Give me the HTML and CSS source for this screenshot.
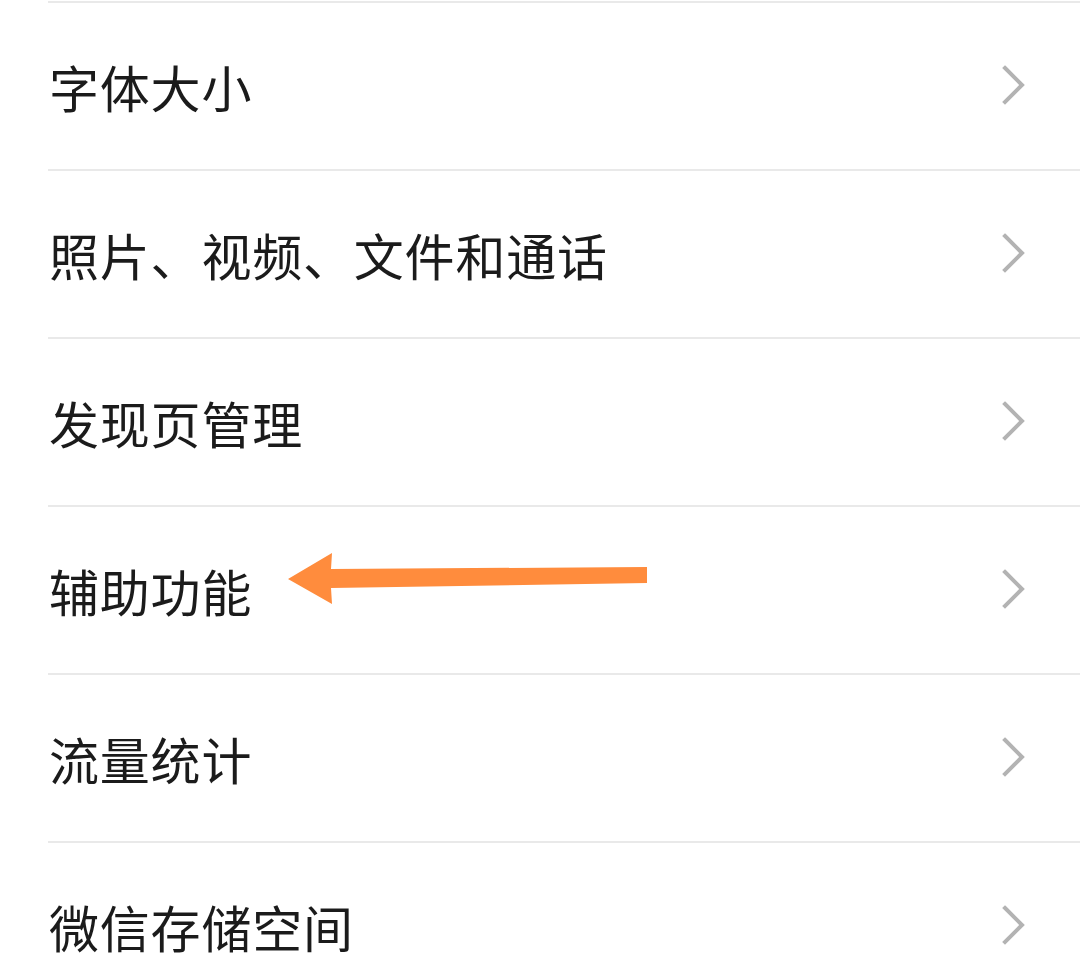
FILE: index.html
```html
<!DOCTYPE html>
<html lang="zh-CN">
<head>
<meta charset="utf-8">
<link rel="stylesheet" href="styles.css">
</head>
<body>
<div class="page">
  <div class="top-gap"></div>
  <ul class="list">
    <li class="row"><span class="label">字体大小</span><svg class="chev" viewBox="0 0 24 40"><path d="M3 3 L20 20 L3 37" /></svg></li>
    <li class="row"><span class="label">照片、视频、文件和通话</span><svg class="chev" viewBox="0 0 24 40"><path d="M3 3 L20 20 L3 37" /></svg></li>
    <li class="row"><span class="label">发现页管理</span><svg class="chev" viewBox="0 0 24 40"><path d="M3 3 L20 20 L3 37" /></svg></li>
    <li class="row"><span class="label">辅助功能</span><svg class="chev" viewBox="0 0 24 40"><path d="M3 3 L20 20 L3 37" /></svg></li>
    <li class="row"><span class="label">流量统计</span><svg class="chev" viewBox="0 0 24 40"><path d="M3 3 L20 20 L3 37" /></svg></li>
    <li class="row"><span class="label">微信存储空间</span><svg class="chev" viewBox="0 0 24 40"><path d="M3 3 L20 20 L3 37" /></svg></li>
  </ul>
  <svg class="arrow" width="1080" height="975" viewBox="0 0 1080 975">
    <polygon points="288,579 332,553 331,569 647,567 647,583 331,588 332,604" />
  </svg>
</div>
</body>
</html>
```
FILE: styles.css
```css
html, body {
  margin: 0;
  padding: 0;
  background: #ffffff;
}
.page {
  position: relative;
  width: 1080px;
  height: 975px;
  overflow: hidden;
  background: #ffffff;
  font-family: "Noto Sans CJK SC", "Noto Sans", sans-serif;
}
.top-gap {
  height: 1px;
}
.list {
  list-style: none;
  margin: 0;
  padding: 0 0 0 48px;
}
.row {
  height: 166px;
  border-top: 2px solid #e9e9e9;
  display: flex;
  align-items: center;
  justify-content: space-between;
  padding-right: 54px;
}
.label {
  font-size: 50px;
  line-height: 1;
  letter-spacing: 0.8px;
  color: #1b1b1b;
  padding-left: 1px;
}
.chev {
  width: 24px;
  height: 40px;
  fill: none;
  stroke: #b3b3b3;
  stroke-width: 4;
  stroke-linecap: square;
  margin-top: -2px;
}
.arrow {
  position: absolute;
  left: 0;
  top: 0;
  pointer-events: none;
}
.arrow polygon {
  fill: #ff8c3d;
}
```
